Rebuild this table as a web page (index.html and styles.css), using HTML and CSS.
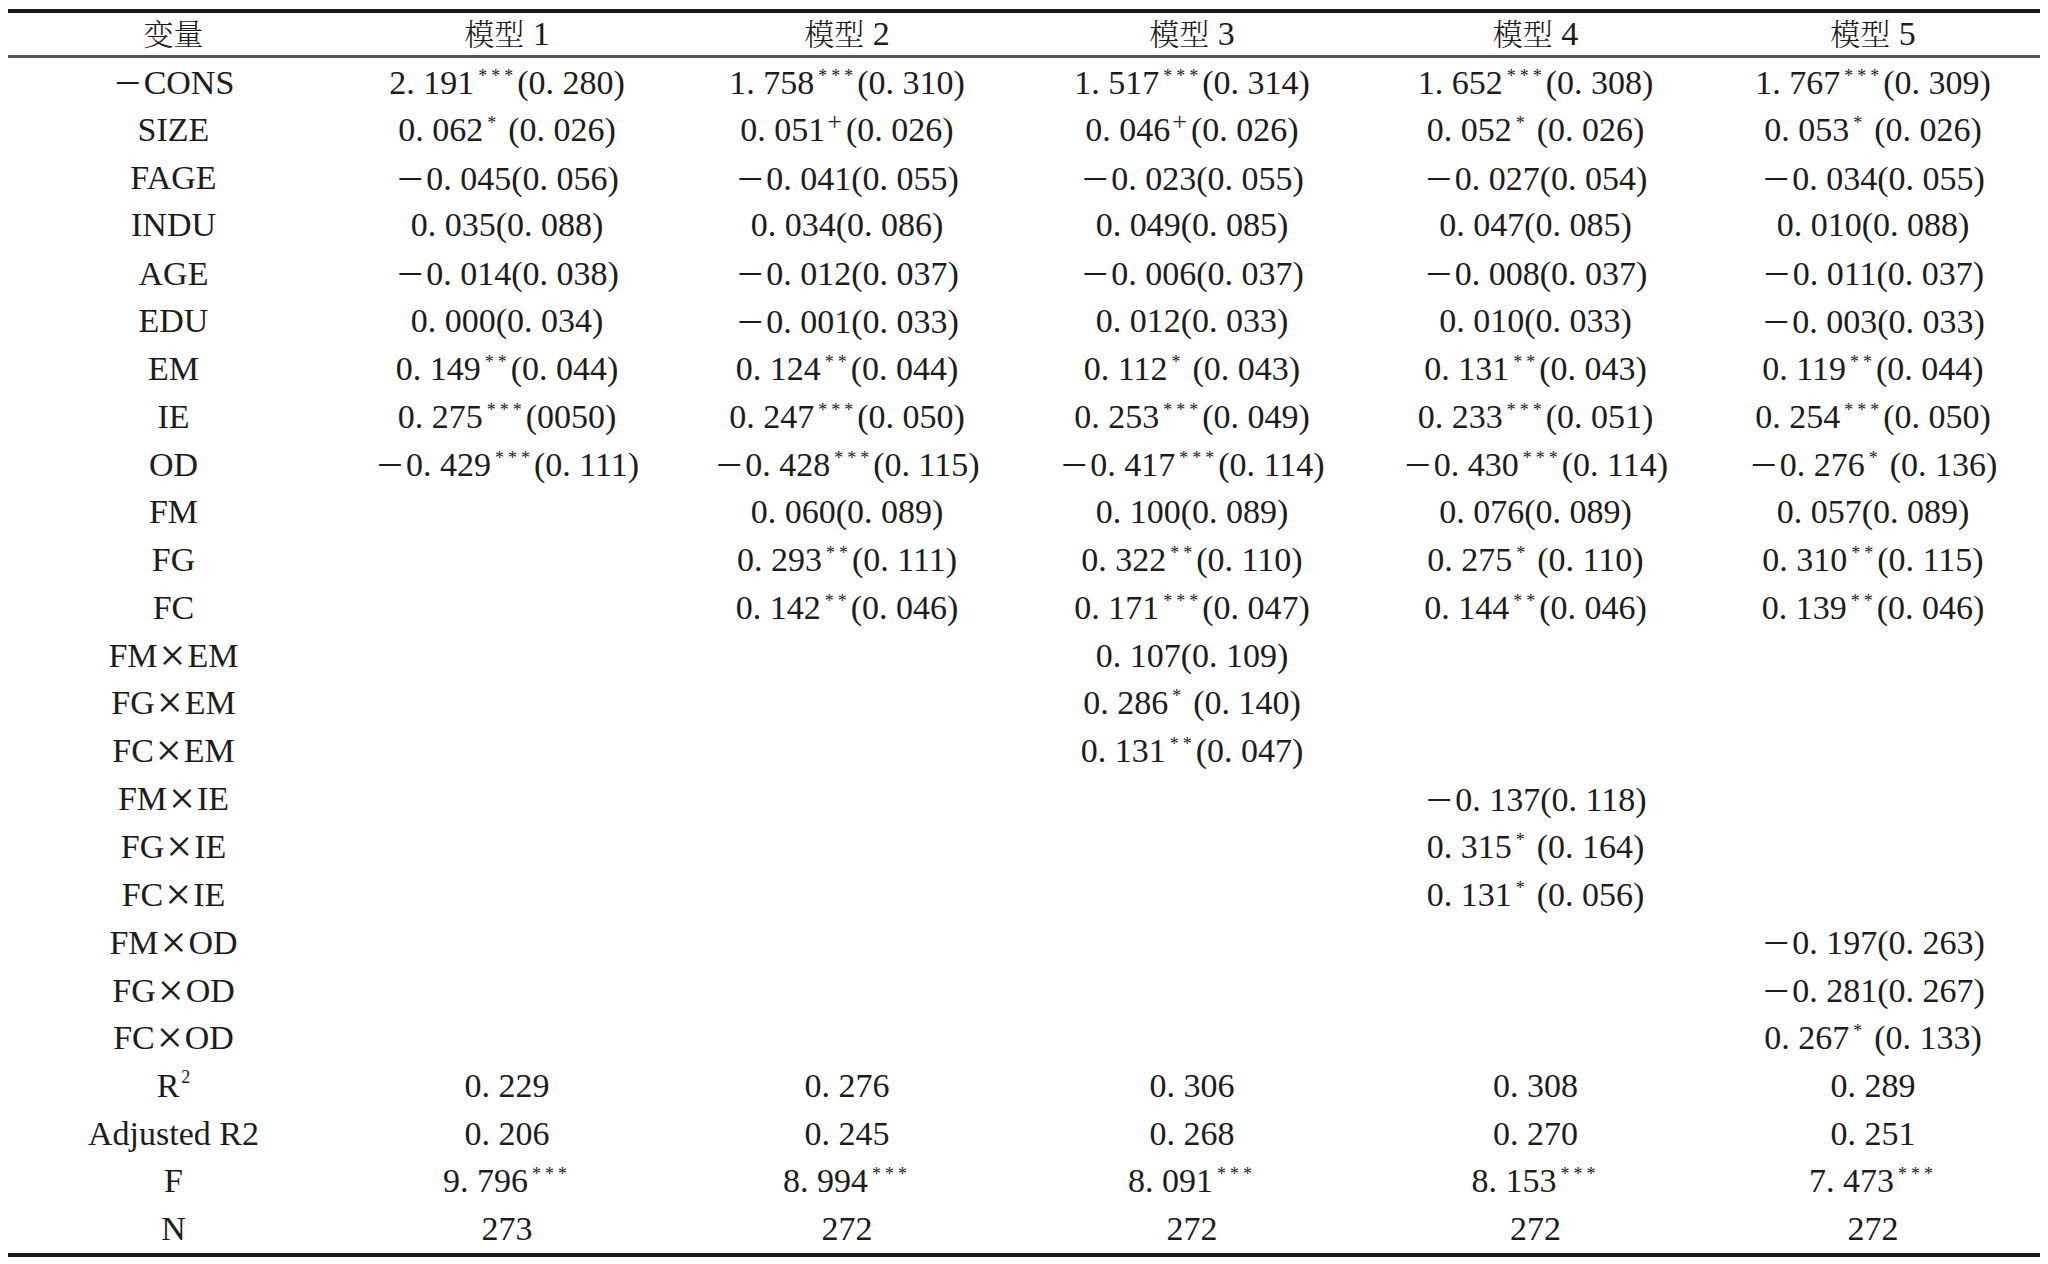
FILE: index.html
```html
<!DOCTYPE html>
<html lang="zh-CN">
<head>
<meta charset="utf-8">
<title>回归结果</title>
<link rel="stylesheet" href="styles.css">
</head>
<body>
<div class="table">
  <div class="row head">
    <div class="zh">变量</div>
    <div><span class="zh">模型</span> 1</div>
    <div><span class="zh">模型</span> 2</div>
    <div><span class="zh">模型</span> 3</div>
    <div><span class="zh">模型</span> 4</div>
    <div><span class="zh">模型</span> 5</div>
  </div>
  <div class="body">
    <div class="row">
      <div><span class="mn">－</span>CONS</div>
      <div>2. 191<sup>***</sup>(0. 280)</div>
      <div>1. 758<sup>***</sup>(0. 310)</div>
      <div>1. 517<sup>***</sup>(0. 314)</div>
      <div>1. 652<sup>***</sup>(0. 308)</div>
      <div>1. 767<sup>***</sup>(0. 309)</div>
    </div>
    <div class="row">
      <div>SIZE</div>
      <div>0. 062<sup class="one">*</sup>(0. 026)</div>
      <div>0. 051<sup class="plus">+</sup>(0. 026)</div>
      <div>0. 046<sup class="plus">+</sup>(0. 026)</div>
      <div>0. 052<sup class="one">*</sup>(0. 026)</div>
      <div>0. 053<sup class="one">*</sup>(0. 026)</div>
    </div>
    <div class="row">
      <div>FAGE</div>
      <div><span class="mn">－</span>0. 045(0. 056)</div>
      <div><span class="mn">－</span>0. 041(0. 055)</div>
      <div><span class="mn">－</span>0. 023(0. 055)</div>
      <div><span class="mn">－</span>0. 027(0. 054)</div>
      <div><span class="mn">－</span>0. 034(0. 055)</div>
    </div>
    <div class="row">
      <div>INDU</div>
      <div>0. 035(0. 088)</div>
      <div>0. 034(0. 086)</div>
      <div>0. 049(0. 085)</div>
      <div>0. 047(0. 085)</div>
      <div>0. 010(0. 088)</div>
    </div>
    <div class="row">
      <div>AGE</div>
      <div><span class="mn">－</span>0. 014(0. 038)</div>
      <div><span class="mn">－</span>0. 012(0. 037)</div>
      <div><span class="mn">－</span>0. 006(0. 037)</div>
      <div><span class="mn">－</span>0. 008(0. 037)</div>
      <div><span class="mn">－</span>0. 011(0. 037)</div>
    </div>
    <div class="row">
      <div>EDU</div>
      <div>0. 000(0. 034)</div>
      <div><span class="mn">－</span>0. 001(0. 033)</div>
      <div>0. 012(0. 033)</div>
      <div>0. 010(0. 033)</div>
      <div><span class="mn">－</span>0. 003(0. 033)</div>
    </div>
    <div class="row">
      <div>EM</div>
      <div>0. 149<sup>**</sup>(0. 044)</div>
      <div>0. 124<sup>**</sup>(0. 044)</div>
      <div>0. 112<sup class="one">*</sup>(0. 043)</div>
      <div>0. 131<sup>**</sup>(0. 043)</div>
      <div>0. 119<sup>**</sup>(0. 044)</div>
    </div>
    <div class="row">
      <div>IE</div>
      <div>0. 275<sup>***</sup>(0050)</div>
      <div>0. 247<sup>***</sup>(0. 050)</div>
      <div>0. 253<sup>***</sup>(0. 049)</div>
      <div>0. 233<sup>***</sup>(0. 051)</div>
      <div>0. 254<sup>***</sup>(0. 050)</div>
    </div>
    <div class="row">
      <div>OD</div>
      <div><span class="mn">－</span>0. 429<sup>***</sup>(0. 111)</div>
      <div><span class="mn">－</span>0. 428<sup>***</sup>(0. 115)</div>
      <div><span class="mn">－</span>0. 417<sup>***</sup>(0. 114)</div>
      <div><span class="mn">－</span>0. 430<sup>***</sup>(0. 114)</div>
      <div><span class="mn">－</span>0. 276<sup class="one">*</sup>(0. 136)</div>
    </div>
    <div class="row">
      <div>FM</div>
      <div></div>
      <div>0. 060(0. 089)</div>
      <div>0. 100(0. 089)</div>
      <div>0. 076(0. 089)</div>
      <div>0. 057(0. 089)</div>
    </div>
    <div class="row">
      <div>FG</div>
      <div></div>
      <div>0. 293<sup>**</sup>(0. 111)</div>
      <div>0. 322<sup>**</sup>(0. 110)</div>
      <div>0. 275<sup class="one">*</sup>(0. 110)</div>
      <div>0. 310<sup>**</sup>(0. 115)</div>
    </div>
    <div class="row">
      <div>FC</div>
      <div></div>
      <div>0. 142<sup>**</sup>(0. 046)</div>
      <div>0. 171<sup>***</sup>(0. 047)</div>
      <div>0. 144<sup>**</sup>(0. 046)</div>
      <div>0. 139<sup>**</sup>(0. 046)</div>
    </div>
    <div class="row">
      <div>FM<span class="x">×</span>EM</div>
      <div></div><div></div>
      <div>0. 107(0. 109)</div>
      <div></div><div></div>
    </div>
    <div class="row">
      <div>FG<span class="x">×</span>EM</div>
      <div></div><div></div>
      <div>0. 286<sup class="one">*</sup>(0. 140)</div>
      <div></div><div></div>
    </div>
    <div class="row">
      <div>FC<span class="x">×</span>EM</div>
      <div></div><div></div>
      <div>0. 131<sup>**</sup>(0. 047)</div>
      <div></div><div></div>
    </div>
    <div class="row">
      <div>FM<span class="x">×</span>IE</div>
      <div></div><div></div><div></div>
      <div><span class="mn">－</span>0. 137(0. 118)</div>
      <div></div>
    </div>
    <div class="row">
      <div>FG<span class="x">×</span>IE</div>
      <div></div><div></div><div></div>
      <div>0. 315<sup class="one">*</sup>(0. 164)</div>
      <div></div>
    </div>
    <div class="row">
      <div>FC<span class="x">×</span>IE</div>
      <div></div><div></div><div></div>
      <div>0. 131<sup class="one">*</sup>(0. 056)</div>
      <div></div>
    </div>
    <div class="row">
      <div>FM<span class="x">×</span>OD</div>
      <div></div><div></div><div></div><div></div>
      <div><span class="mn">－</span>0. 197(0. 263)</div>
    </div>
    <div class="row">
      <div>FG<span class="x">×</span>OD</div>
      <div></div><div></div><div></div><div></div>
      <div><span class="mn">－</span>0. 281(0. 267)</div>
    </div>
    <div class="row">
      <div>FC<span class="x">×</span>OD</div>
      <div></div><div></div><div></div><div></div>
      <div>0. 267<sup class="one">*</sup>(0. 133)</div>
    </div>
    <div class="row">
      <div>R<sup class="sq">2</sup></div>
      <div>0. 229</div>
      <div>0. 276</div>
      <div>0. 306</div>
      <div>0. 308</div>
      <div>0. 289</div>
    </div>
    <div class="row">
      <div>Adjusted R2</div>
      <div>0. 206</div>
      <div>0. 245</div>
      <div>0. 268</div>
      <div>0. 270</div>
      <div>0. 251</div>
    </div>
    <div class="row">
      <div>F</div>
      <div>9. 796<sup>***</sup></div>
      <div>8. 994<sup>***</sup></div>
      <div>8. 091<sup>***</sup></div>
      <div>8. 153<sup>***</sup></div>
      <div>7. 473<sup>***</sup></div>
    </div>
    <div class="row">
      <div>N</div>
      <div>273</div>
      <div>272</div>
      <div>272</div>
      <div>272</div>
      <div>272</div>
    </div>
  </div>
</div>
</body>
</html>
```
FILE: styles.css
```css
html, body {
  margin: 0;
  padding: 0;
  background: #ffffff;
}

body {
  font-family: "Liberation Serif", "Noto Serif CJK SC", "Noto Sans CJK SC", serif;
  font-size: 34px;
  color: #1c1c1c;
}

.table {
  width: 2032px;
  margin: 9px 0 0 8px;
  border-top: 4px solid #1a1a1a;
  border-bottom: 4px solid #1a1a1a;
}

.row {
  display: grid;
  grid-template-columns: 331px 336px 344px 346px 341px 334px;
  align-items: center;
  text-align: center;
  height: 47.8px;
  line-height: 47.8px;
  white-space: nowrap;
}

.head {
  height: 42px;
  line-height: 38px;
  padding-bottom: 0;
  border-bottom: 3px solid #555555;
  align-items: start;
}

.zh {
  font-family: "Noto Serif CJK SC", "Noto Sans CJK SC", serif;
  font-size: 30px;
  font-weight: 300;
}

.mn {
  font-family: "Noto Sans CJK SC", sans-serif;
  font-size: 30px;
  margin-right: 1px;
}

.x {
  font-family: "Liberation Serif", serif;
  font-size: 46px;
  line-height: 0;
  vertical-align: -4px;
  margin: 0 2px;
}

sup {
  font-size: 18px;
  line-height: 0;
  vertical-align: 12px;
  letter-spacing: 4px;
  padding-left: 4px;
}

sup.one {
  padding-right: 8px;
}

sup.plus {
  font-size: 26px;
  vertical-align: 11px;
  padding-left: 2px;
  padding-right: 4px;
  letter-spacing: 0;
}

sup.sq {
  font-size: 18px;
  letter-spacing: 0;
  padding-left: 2px;
  vertical-align: 14px;
}
```
